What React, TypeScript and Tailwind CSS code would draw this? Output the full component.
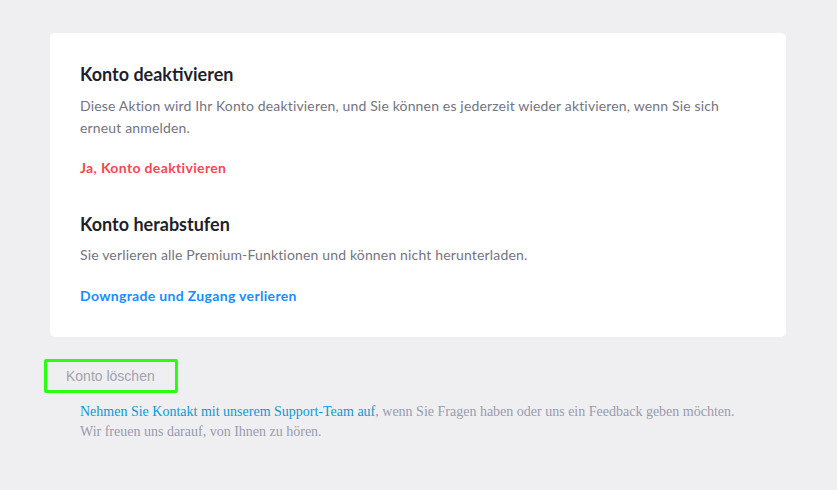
export default function App() {
  return (
    <div className="min-h-[490px] w-full bg-[#efeff1] px-[50px] pt-[33px]">
      <div className="w-[736px] rounded-[5px] bg-white px-[30px] pt-[29px] pb-[30px] font-['Lato',sans-serif]">
        <section>
          <h2 className="text-[18px] font-bold leading-[24px] text-[#1f1f2b]">Konto deaktivieren</h2>
          <p className="mt-[9px] text-[14px] leading-[22px] tracking-[0.16px] text-[#74747f]">
            Diese Aktion wird Ihr Konto deaktivieren, und Sie können es jederzeit wieder aktivieren, wenn Sie sich
            erneut anmelden.
          </p>
          <a className="mt-[18px] block text-[14px] font-bold leading-[22px] tracking-[0.35px] text-[#f7474f]">
            Ja, Konto deaktivieren
          </a>
        </section>
        <section className="mt-[33px]">
          <h2 className="text-[18px] font-bold leading-[24px] text-[#1f1f2b]">Konto herabstufen</h2>
          <p className="mt-[8px] text-[14px] leading-[22px] tracking-[0.16px] text-[#74747f]">
            Sie verlieren alle Premium-Funktionen und können nicht herunterladen.
          </p>
          <a className="mt-[19px] block text-[14px] font-bold leading-[22px] tracking-[0.33px] text-[#1a8cff]">
            Downgrade und Zugang verlieren
          </a>
        </section>
      </div>

      <div className="-ml-[6px] mt-[22px] flex h-[34px] w-[134px] items-center rounded-[2px] border-[3px] border-[#2bff10] pl-[19px] font-['Liberation_Sans',sans-serif] text-[14px] text-[#a2a2b0]">
        Konto löschen
      </div>

      <p className="ml-[30px] mt-[9px] font-['Liberation_Serif',serif] text-[14px] leading-[20px] text-[#9a9ab0]">
        <a className="text-[#0d99d6]">Nehmen Sie Kontakt mit unserem Support-Team auf</a>, wenn Sie Fragen haben oder uns
        ein Feedback geben möchten.
        <br />
        Wir freuen uns darauf, von Ihnen zu hören.
      </p>
    </div>
  );
}
